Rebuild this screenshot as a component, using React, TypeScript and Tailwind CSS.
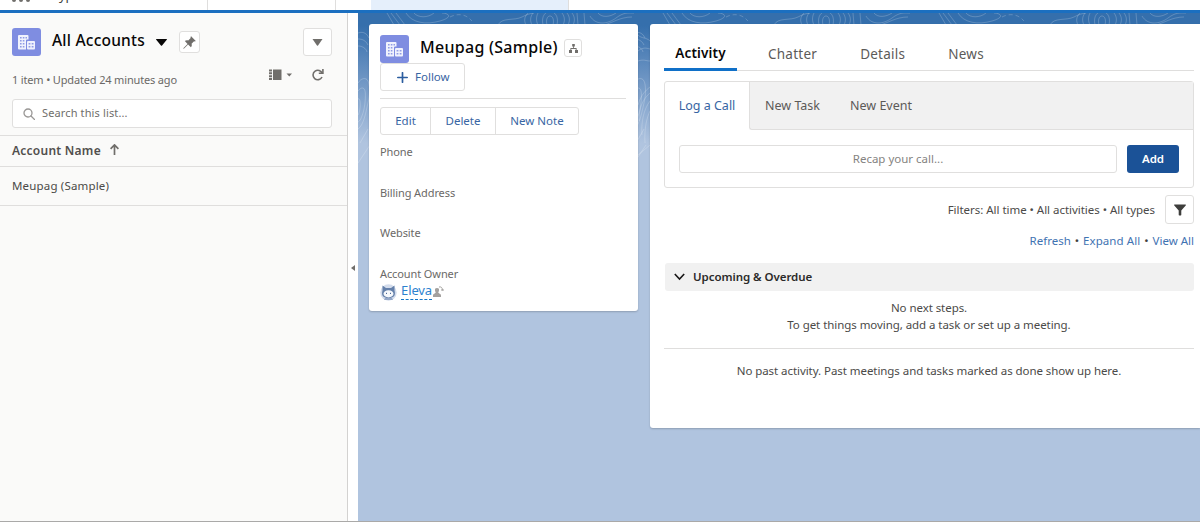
import type { ReactNode } from 'react';

const FIELDS = ['Phone', 'Billing Address', 'Website'];
const TABS = ['Chatter', 'Details', 'News'];

function AccountIcon() {
  return (
    <div className="w-[29px] h-7 rounded-[3px] bg-[#7f8de1] flex items-center justify-center shrink-0">
      <svg width="17" height="15" viewBox="0 0 17 15">
        <path d="M1 0h8.500a1 1 0 0 1 1 1v3.500H9a1 1 0 0 0-1 1V14.500H1a1 1 0 0 1-1-1V1a1 1 0 0 1 1-1z" fill="#f0f2fd" />
        <rect x="9" y="6" width="8" height="8.500" rx="1" fill="#f0f2fd" />
        <path d="M2 2h1.600v1.600H2zM4.800 2h1.600v1.600H4.800zM7.500 2h1.500v1.600H7.500zM2 5h1.600v1.600H2zM4.800 5h1.600v1.600H4.800zM2 8h1.600v1.600H2zM4.800 8h1.600v1.600H4.800zM2 11h1.600v1.600H2zM4.800 11h1.600v1.600H4.800zM10.600 8h1.800v1.600h-1.800zM13.700 8h1.800v1.600h-1.800zM10.600 11h1.800v1.600h-1.800zM13.700 11h1.800v1.600h-1.800z" fill="#8f9be5" />
      </svg>
    </div>
  );
}

function IconButton({ children, className }: { children: ReactNode; className: string }) {
  return (
    <button className={`bg-white border border-[#e0dfde] rounded-[3px] flex items-center justify-center shrink-0 ${className}`}>
      {children}
    </button>
  );
}

function Topography() {
  return (
    <svg className="absolute inset-0" width="842" height="150" fill="none" stroke="#fff" strokeOpacity="0.2">
      <defs>
        <pattern id="topo" width="276" height="150" patternUnits="userSpaceOnUse">
          <path d="M33 0l9 12M38 0l9 12M29 0l7 12M48 0c6 10 20 12 34 8s8-8 2-8M56 0c4 5 14 5 20 0" />
          <path d="M92 4c8-4 16-3 22 4" strokeDasharray="4 3" />
          <path d="M140 12c4-8 16-4 24-8s8-3 12-4M170 0c-4 4-4 8-2 12M175 0c-3 4-3 8-1 12M180 0c-2 4-2 8 0 12" />
          <path d="M185 12c-4-18 18-18 14 0M189 12c-3-12 9-12 6 0M204 0c3 4 3 8 1 12M209 0c3 4 3 8 1 12M214 0c3 4 3 8 1 12M219 0l1 12M226 0l1 12" />
          <path d="M232 3c6 10 18 8 26 2s12-5 18-5M240 0c4 5 12 4 18 0M246 12c8-2 16-8 28-8" />
          <path d="M0 20c6-2 9 1 11 5M0 26c5 0 8 2 10 6M0 33c4 0 8 2 9 6" />
          <path d="M0 70c3-5 8-6 10-2s2 14 0 22-4 22-10 26M0 78c3-4 6-4 7 0s0 16-2 22-3 8-5 9M0 86c3-2 3 12 0 16M2 130l8-14M0 150l12-18" />
        </pattern>
      </defs>
      <rect width="842" height="150" fill="url(#topo)" stroke="none" />
      <path d="M280 22c4 4 8 2 12 6M280 38c5-4 8-3 12-2M280 48c6-2 8 0 12 0M280 92c3-10 7-14 12-18M281 108c0-14 4-22 11-28M284 122c-1-14 2-26 8-34M287 130c-1-14 2-26 5-32M280 142l12-10" />
    </svg>
  );
}

function AccountList() {
  return (
    <aside className="w-[348px] shrink-0 bg-[#fafaf9] border-r border-[#d3d2d1]">
      <div className="h-[122px] pl-3 pr-[15px] pt-[15px]">
        <div className="flex items-center h-7">
          <AccountIcon />
          <h1 className="ml-[11px] w-[104px] -mt-[2px] text-[15.500px] tracking-[0.22px] font-medium text-[#080707] whitespace-nowrap">All Accounts</h1>
          <svg width="11" height="7" viewBox="0 0 10 7" className="shrink-0" preserveAspectRatio="none"><path d="M.5 0h9a.4.4 0 0 1 .3.700L5.500 6.500a.7.7 0 0 1-1 0L.2.700A.4.4 0 0 1 .5 0z" fill="#080707" /></svg>
          <IconButton className="ml-3 w-[21px] h-[22px]">
            <svg width="13" height="13" viewBox="0 0 12 12"><path d="M7.500.2l4.300 4.300-.8.600-.8-.2-2.300 2.300c.5 1.300.2 2.400-.6 3.200L4.700 7.800 1 11.500l-.8.300.3-.8 3.700-3.700L1.700 4.700c.8-.8 1.900-1 3.100-.6L7.100 1.800 6.900 1z" fill="#706e6b" /></svg>
          </IconButton>
          <IconButton className="ml-auto w-[29px] h-7">
            <svg className="mt-px" width="11" height="7" viewBox="0 0 11 7"><path d="M.5 0h10L6 6.400a.7.7 0 0 1-1 0z" fill="#706e6b" /></svg>
          </IconButton>
        </div>
        <div className="flex h-[43px] pt-[10px]">
          <p className="h-7 leading-7 text-[11px] tracking-[-0.16px] text-[#6b6967] grow">1 item • Updated 24 minutes ago</p>
          <div className="flex items-center h-[18px] pr-2">
            <svg width="23" height="12" viewBox="0 0 23 12" fill="#706e6b"><path d="M0 .5h3v2H0zM0 3.300h3v2H0zM0 6.200h3v2H0zM0 9h3v2H0zM4 .5h8.500v10.500H4zM17.500 4.500h5.500l-2.700 3z" /></svg>
            <svg className="ml-5" width="12" height="12" viewBox="0 0 12 12"><path d="M10.200 4.500A4.700 4.700 0 1 0 10 8" fill="none" stroke="#706e6b" strokeWidth="1.600" /><path d="M11.700 0v5H6.800V3.600h3.300V0z" fill="#706e6b" /></svg>
          </div>
        </div>
        <div className="h-[29px] bg-white border border-[#e0dfde] rounded-[3px] flex items-center pl-[10px]">
          <svg width="12" height="12" viewBox="0 0 12 12" fill="none" stroke="#999795" strokeWidth="1.300"><circle cx="5" cy="5" r="4" /><path d="M8 8l3.500 3.500" strokeLinecap="round" /></svg>
          <span className="ml-[7px] text-[11px] tracking-[0.13px] text-[#706e6b]">Search this list...</span>
        </div>
      </div>
      <div className="h-8 pl-3 border-y border-[#dfdedd] flex items-center text-[12px] tracking-[0.25px] font-semibold text-[#514f4d]">
        Account Name
        <svg className="ml-[9px] mb-1" width="9" height="11" viewBox="0 0 9 11" fill="none" stroke="#706e6b" strokeWidth="1.700"><path d="M4.500 11V1.200M.6 4.800l3.900-3.900 3.900 3.900" /></svg>
      </div>
      <div className="h-[39px] pl-3 border-b border-[#dfdedd] flex items-center text-[11.500px] tracking-[0.17px] text-[#4b4a48]">Meupag (Sample)</div>
    </aside>
  );
}

function AccountCard() {
  return (
    <section className="w-[269px] h-[287px] shrink-0 bg-white rounded-[3px] shadow-[0_1px_2px_rgba(0,0,0,0.2)] pl-[11px] pr-3 pt-[11px]">
      <div className="flex h-7">
        <AccountIcon />
        <h2 className="ml-[11px] w-[144px] leading-[25px] text-[16px] tracking-[0.28px] font-medium text-[#080707] whitespace-nowrap">Meupag (Sample)</h2>
        <IconButton className="mt-1 w-[18px] h-[18px]">
          <svg width="9" height="9" viewBox="0 0 9 9" fill="#706e6b"><path d="M3.200 0h2.600v2.600h-.9v1.500h2.700v2H9V9H6V6.100h.7V5H2.300v1.100H3V9H0V6.100h1.400v-2h2.700V2.600h-.9z" /></svg>
        </IconButton>
      </div>
      <button className="w-[85px] h-7 border border-[#e0dfde] rounded-[3px] flex items-center pl-4 text-[11.500px] text-[#3865a3]">
        <svg width="11" height="11" viewBox="0 0 11 11" stroke="#2b5d9f" strokeWidth="1.700" strokeLinecap="round"><path d="M5.500.8v9.400M.8 5.500h9.400" /></svg>
        <span className="ml-[7px]">Follow</span>
      </button>
      <div className="mt-[7px] h-px bg-[#dfdedd]" />
      <div className="mt-2 w-[199px] h-7 border border-[#e0dfde] rounded-[3px] flex items-center text-center text-[11.500px] leading-[26px] text-[#3865a3]">
        <button className="w-[50px] border-r border-[#e0dfde]">Edit</button>
        <button className="w-[65px] border-r border-[#e0dfde]">Delete</button>
        <button className="grow">New Note</button>
      </div>
      <dl className="mt-[9px] text-[11px] tracking-[-0.1px] leading-[15px] text-[#6b6967]">
        {FIELDS.map((field) => (
          <dt key={field} className="h-[40.600px]">{field}</dt>
        ))}
        <dt className="h-4">Account Owner</dt>
        <dd className="flex h-[19px]">
          <svg className="mt-[2px]" width="17" height="17" viewBox="0 0 17 17">
            <circle cx="8.500" cy="8.500" r="8.200" fill="#d3dcec" />
            <path d="M2.500 1.500l3.500 2.500h5l3.500-2.500v5c1.500 5.500-1 7.500-6 7.500S1 12 2.500 6.500z" fill="#6480aa" />
            <ellipse cx="8.500" cy="9.800" rx="5" ry="3.600" fill="#f5f8fc" />
            <path d="M6.500 8.800v1.200M10.500 8.800v1.200" stroke="#4f6a98" />
            <path d="M5 14h7l1 2H4z" fill="#93a7c8" />
          </svg>
          <a className="ml-1 h-[18px] leading-[17px] border-b border-dashed border-[#1577c9] text-[13px] text-[#2d82cf]">Eleva</a>
          <svg className="ml-px mt-[4px]" width="11" height="11" viewBox="0 0 11 11" fill="#a3a19f"><path d="M4 2a2 2 0 0 1 2 2.300C6 5.500 5.500 6 5.300 6.500c0 1 2.700 1 2.700 3V11H0V9.500c0-2 2.700-2 2.700-3C2.500 6 2 5.500 2 4.300A2 2 0 0 1 4 2z" /><path d="M6 1c2-.5 3.500.5 3.500 3.500M8 4h3" fill="none" stroke="#a3a19f" /></svg>
        </dd>
      </dl>
    </section>
  );
}

function ActivityPanel() {
  return (
    <section className="grow h-[404px] bg-white rounded-l-[3px] shadow-[0_1px_2px_rgba(0,0,0,0.2)] pl-[14px] pr-[6px] pt-[14px]">
      <nav className="flex h-[33px] border-b border-[#dfdedd] text-[13.500px] leading-[28px] text-[#5c5a58]">
        <button className="w-[73px] h-[33px] shrink-0 border-b-[3px] border-[#1070c8] tracking-[0.15px] font-semibold text-[#080707]">Activity</button>
        <div className="ml-[31px] flex gap-[43px] tracking-[0.25px]">
          {TABS.map((tab) => (
            <button key={tab}>{tab}</button>
          ))}
        </div>
      </nav>
      <div className="mt-[10px] h-[107px] border border-[#e0dfde] rounded-[3px]">
        <div className="flex h-12 text-[12.500px] text-[#5c5a58]">
          <button className="w-[84px] text-[#3865a3]">Log a Call</button>
          <div className="grow bg-[#f1f1f1] border-l border-b border-[#e0dfde] rounded-bl-[3px] flex pl-[15px] pt-px gap-[30px]">
            <button>New Task</button>
            <button>New Event</button>
          </div>
        </div>
        <div className="flex gap-[10px] pl-[14px] pr-[14px] pt-[15px] text-[11.500px]">
          <div className="grow h-7 border border-[#e0dfde] rounded-[3px] flex items-center justify-center text-[#858381]">Recap your call...</div>
          <button className="w-[52px] h-7 bg-[#1b5297] rounded-[3px] font-semibold text-white">Add</button>
        </div>
      </div>
      <div className="mt-[7px] flex items-center justify-end h-[29px] text-[11.500px] text-[#4b4a48]">
        <span className="pt-px tracking-[-0.03px]">Filters: All time • All activities • All types</span>
        <IconButton className="ml-[10px] w-[29px] h-[29px]">
          <svg width="12" height="12" viewBox="0 0 12 12"><path d="M.7.500h10.600a.5.500 0 0 1 .4.900L7.300 6.500v4.300a.6.600 0 0 1-.6.600H5.300a.6.600 0 0 1-.6-.6V6.500L.3 1.400A.5.500 0 0 1 .7.500z" fill="#3e3e3c" /></svg>
        </IconButton>
      </div>
      <div className="mt-[9px] flex justify-end gap-1 h-4 leading-4 text-[11.500px] text-[#3f73b2]">
        <a>Refresh</a><span className="text-[#3e3e3c]">•</span><a className="tracking-[0.07px]">Expand All</a><span className="text-[#3e3e3c]">•</span><a>View All</a>
      </div>
      <h3 className="mt-[14px] ml-px h-7 bg-[#f1f1f1] rounded-[3px] flex items-center pl-[9px] text-[11.500px] font-semibold text-[#2b2a29]">
        <svg width="11" height="8" viewBox="0 0 11 8" fill="none" stroke="#181717" strokeWidth="1.600"><path d="M.8 1l4.700 5L10.200 1" /></svg>
        <span className="ml-2 tracking-[-0.05px]">Upcoming &amp; Overdue</span>
      </h3>
      <div className="h-[58px] pt-2 border-b border-[#dfdedd] text-center text-[11.500px] tracking-[-0.06px] leading-[17px] text-[#4b4a48]">
        <p>No next steps.</p>
        <p>To get things moving, add a task or set up a meeting.</p>
      </div>
      <p className="pt-[13px] text-center text-[11.500px] tracking-[-0.06px] leading-[17px] text-[#4b4a48]">No past activity. Past meetings and tasks marked as done show up here.</p>
    </section>
  );
}

export default function App() {
  return (
    <div className="w-[1200px] h-[532px] bg-white overflow-hidden font-['Noto_Sans',sans-serif]">
      <header className="h-[13px] border-b-[3px] border-[#1b6fc0] flex overflow-hidden">
        <div className="w-[208px] border-r border-[#dfdedd] flex">
          <div className="ml-3 flex gap-[3px]">
            <i className="w-1 h-[2px] rounded-b bg-[#706e6b]" />
            <i className="w-1 h-[2px] rounded-b bg-[#706e6b]" />
            <i className="w-1 h-[2px] rounded-b bg-[#706e6b]" />
          </div>
          <span className="ml-[22px] -mt-[13px] text-[13px] leading-4 text-[#3e3e3c]">Typ</span>
        </div>
        <div className="w-32 border-r border-[#dfdedd]" />
        <div className="ml-[35px] w-[198px] border-r border-[#dfdedd] bg-[#e5effb]" />
      </header>
      <div className="flex h-[509px] border-b border-[#aaa9a8]">
        <AccountList />
        <div className="w-[10px] shrink-0 flex items-start">
          <svg className="ml-[3px] mt-[252px]" width="4" height="6" viewBox="0 0 4 6"><path d="M4 0v6L0 3z" fill="#706e6b" /></svg>
        </div>
        <main className="relative grow bg-[#b0c4df]">
          <div className="absolute inset-x-0 top-0 h-[130px] bg-linear-to-b from-[#356fac] from-10% to-[#b0c4df]" />
          <Topography />
          <div className="relative flex items-start gap-3 pl-[11px] pt-[11px]">
            <AccountCard />
            <ActivityPanel />
          </div>
        </main>
      </div>
    </div>
  );
}
